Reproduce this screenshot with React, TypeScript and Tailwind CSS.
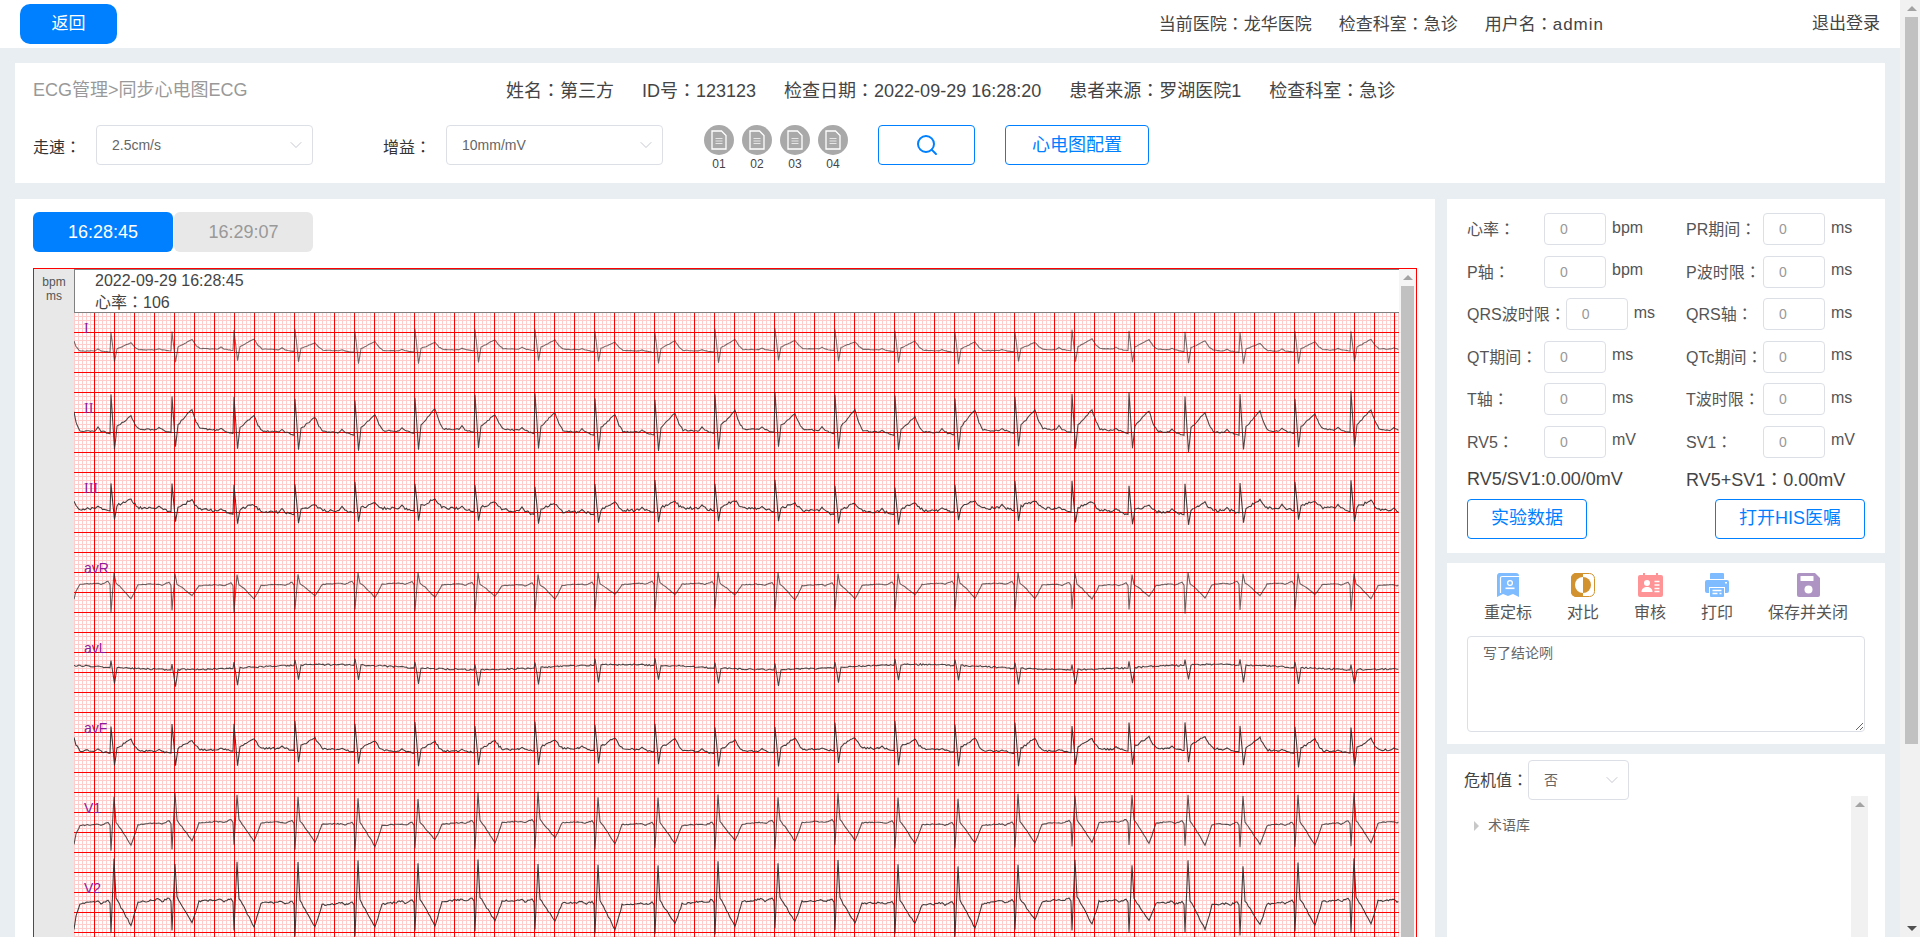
import { ChevronDown, Search } from "lucide-react";

const fontStack = { fontFamily: '"Liberation Sans", "Noto Sans CJK SC", sans-serif' };

const measures = [
  [
    { label: "心率", value: "0", unit: "bpm" },
    { label: "PR期间", value: "0", unit: "ms" },
  ],
  [
    { label: "P轴", value: "0", unit: "bpm" },
    { label: "P波时限", value: "0", unit: "ms" },
  ],
  [
    { label: "QRS波时限", value: "0", unit: "ms" },
    { label: "QRS轴", value: "0", unit: "ms" },
  ],
  [
    { label: "QT期间", value: "0", unit: "ms" },
    { label: "QTc期间", value: "0", unit: "ms" },
  ],
  [
    { label: "T轴", value: "0", unit: "ms" },
    { label: "T波时限", value: "0", unit: "ms" },
  ],
  [
    { label: "RV5", value: "0", unit: "mV" },
    { label: "SV1", value: "0", unit: "mV" },
  ],
];

// beat positions read off the reference, in page x
const beats = [
  111, 172, 234, 295, 355, 415, 475, 535, 595, 655, 715, 775, 835, 895, 955,
  1015, 1072, 1129, 1185, 1240, 1295, 1351, 1407,
];

type Lead = {
  name: string;
  labelY: number;
  base: number;
  r: number;
  s: number;
  t: number;
  p: number;
  noise: number;
  start: number;
  wander: number;
  inverted?: boolean;
  serif?: boolean;
  opacity: number;
};

const leads: Lead[] = [
  { name: "I", labelY: 333, base: 350, r: 20, s: 12, t: 9, p: 1.5, noise: 0.3, start: -10, wander: 1, serif: true, opacity: 0.65 },
  { name: "II", labelY: 413, base: 431, r: 36, s: 18, t: 18, p: 3, noise: 0.8, start: -20, wander: 1.5, serif: true, opacity: 0.85 },
  { name: "III", labelY: 493, base: 510, r: 27, s: 12, t: 8, p: 3, noise: 1.4, start: -8, wander: 2, serif: true, opacity: 0.9 },
  { name: "avR", labelY: 573, base: 585, r: 12, s: 26, t: 12, p: 1, noise: 0.35, start: 15, wander: 0.8, inverted: true, opacity: 0.7 },
  { name: "avL", labelY: 653, base: 667, r: 6, s: 16, t: 0, p: 0.5, noise: 0.8, start: 0, wander: 2.5, opacity: 0.85 },
  { name: "avF", labelY: 733, base: 750, r: 27, s: 15, t: 11, p: 2, noise: 1, start: -13, wander: 1.5, opacity: 0.9 },
  { name: "V1", labelY: 813, base: 824, r: 29, s: 24, t: 18, p: 1, noise: 0.5, start: 19, wander: 1.5, inverted: true, opacity: 0.8 },
  { name: "V2", labelY: 893, base: 903, r: 42, s: 30, t: 21, p: 2, noise: 0.9, start: 25, wander: 2, inverted: true, opacity: 0.9 },
];

function makeRandom(seed: number) {
  let s = seed;
  return () => {
    s = (s * 1664525 + 1013904223) % 4294967296;
    return s / 4294967296;
  };
}

function tracePath(lead: Lead, index: number) {
  const rand = makeRandom(index * 977 + 31);
  const anchors: [number, number][] = [];
  if (lead.start !== 0) {
    anchors.push([74, lead.start], [76, lead.start * 0.45], [80, 0]);
  } else {
    anchors.push([74, 0]);
  }

  beats.forEach((x0, i) => {
    const rr = (beats[i + 1] ?? x0 + 56) - x0;
    const r = lead.r * (0.88 + rand() * 0.2);
    const s = lead.s * (0.9 + rand() * 0.2);
    const t = lead.t * (0.8 + rand() * 0.4);
    const p = lead.p * (0.6 + rand() * 0.8);

    if (lead.inverted) {
      anchors.push(
        [x0 - 13, -p],
        [x0 - 10, 0],
        [x0 - 3, -3],
        [x0 - 1, 0],
        [x0, s],
        [x0 + 3, -r],
        [x0 + 5, -r * 0.1],
        [x0 + 10, t * 0.2],
        [x0 + 15, t * 0.6],
        [x0 + 20, t],
        [x0 + 23, t * 0.6],
        [x0 + 27, 0],
        [x0 + rr - 20, -1],
      );
    } else {
      anchors.push(
        [x0 - 16, 0],
        [x0 - 13, -p],
        [x0 - 10, 0],
        [x0 - 3, lead.p * 0.8],
        [x0 - 1, lead.p],
        [x0, -r],
        [x0 + 3.5, s],
        [x0 + 6, -t * 0.25],
        [x0 + 11, -t * 0.5],
        [x0 + 17, -t * 0.85],
        [x0 + 20, -t],
        [x0 + 24, -t * 0.4],
        [x0 + 28, -t * 0.05],
        [x0 + rr - 20, 0],
      );
    }
  });

  let d = "";
  for (let i = 0; i < anchors.length - 1; i++) {
    const [x1, y1] = anchors[i];
    const [x2, y2] = anchors[i + 1];
    if (x1 >= 1399) break;
    const span = x2 - x1;
    const steps = Math.max(1, Math.round(span / 1.5));
    for (let k = 0; k < steps; k++) {
      const x = x1 + (span * k) / steps;
      if (x > 1399) break;
      const jitter = span > 3 ? (rand() - 0.5) * 2 * lead.noise : 0;
      const drift = Math.sin(x / 47 + index) * lead.wander;
      const y = lead.base + y1 + ((y2 - y1) * k) / steps + jitter + drift;
      d += `${d ? "L" : "M"}${x.toFixed(1)} ${y.toFixed(1)}`;
    }
  }
  return d;
}

const minorX = Array.from({ length: 332 }, (_, i) => 74 + i * 4);
const minorY = Array.from({ length: 158 }, (_, i) => 312 + i * 4);
const majorX = Array.from({ length: 66 }, (_, i) => 94 + i * 20);
const majorY = Array.from({ length: 31 }, (_, i) => 332 + i * 20);

function EcgChart() {
  return (
    <svg width="1325" height="625" viewBox="74 313 1325 625" className="block">
      <rect x="74" y="313" width="1325" height="625" fill="#fff" />
      <g stroke="#ffcccc" strokeWidth="1" shapeRendering="crispEdges">
        {minorX.map((x) => (
          <line key={x} x1={x + 0.5} x2={x + 0.5} y1="313" y2="938" />
        ))}
        {minorY.map((y) => (
          <line key={y} y1={y + 0.5} y2={y + 0.5} x1="74" x2="1399" />
        ))}
      </g>
      <g stroke="#ff0000" strokeWidth="1" shapeRendering="crispEdges">
        {majorX.map((x) => (
          <line key={x} x1={x + 0.5} x2={x + 0.5} y1="313" y2="938" />
        ))}
        {majorY.map((y) => (
          <line key={y} y1={y + 0.5} y2={y + 0.5} x1="74" x2="1399" />
        ))}
      </g>
      {leads.map((lead, i) => (
        <g key={lead.name}>
          <path d={tracePath(lead, i)} fill="none" stroke="#2a2a2a" strokeWidth="1.1" strokeOpacity={lead.opacity} />
          <text
            x="84"
            y={lead.labelY}
            fill="#8e1a9c"
            fontSize="14"
            fontFamily={lead.serif ? '"Liberation Serif", serif' : '"Liberation Sans", sans-serif'}
          >
            {lead.name}
          </text>
        </g>
      ))}
    </svg>
  );
}

function ArrowUp({ color = "#a3a3a3" }: { color?: string }) {
  return <span className="block h-0 w-0 border-x-[5px] border-b-[5px] border-x-transparent" style={{ borderBottomColor: color }} />;
}

// the reference's font centres the full-width colon, the TC cut of Noto does too
function Colon() {
  return <span className="font-['Noto_Sans_CJK_TC']">：</span>;
}

function FakeSelect({ text, className }: { text: string; className: string }) {
  return (
    <div className={`flex h-[40px] shrink-0 items-center justify-between rounded-[4px] border border-[#dcdfe6] bg-white pl-[15px] pr-[6px] text-[14px] text-[#666] ${className}`}>
      <span>{text}</span>
      <ChevronDown size={20} strokeWidth={0.8} color="#a8acb6" />
    </div>
  );
}

function FileBadge({ label }: { label: string }) {
  return (
    <div className="flex w-[30px] flex-col items-center">
      <div className="flex h-[30px] w-[30px] items-center justify-center rounded-full bg-[#a9a9a9]">
        <svg width="16" height="20" viewBox="0 0 16 20" fill="none">
          <path d="M1 1h9.5L15 5.5V19H1z" stroke="#fff" strokeWidth="1.3" />
          <path d="M4.5 8.5h7M4.5 11h7M4.5 13.5h7" stroke="#e6e6e6" strokeWidth="1.2" />
        </svg>
      </div>
      <span className="mt-[2px] text-[12px] leading-[14px] text-[#444]">{label}</span>
    </div>
  );
}

function RelocateIcon() {
  return (
    <svg width="24" height="24" viewBox="0 0 24 24">
      <path d="M4 0h16a3 3 0 0 1 3 3v21l-6-3-5 2-5-2-6 3V3a3 3 0 0 1 4-3z" fill="#7fbcff" />
      <path d="M4.5 20V5A1.5 1.5 0 0 1 6 3.5h17" fill="none" stroke="#fff" strokeWidth="1.2" />
      <circle cx="14" cy="10" r="2.4" fill="none" stroke="#fff" strokeWidth="1.3" />
      <rect x="9.5" y="14.5" width="9" height="1.6" fill="#fff" />
    </svg>
  );
}

function CompareIcon() {
  return (
    <svg width="24" height="24" viewBox="0 0 24 24">
      <rect x="0.5" y="0.5" width="23" height="23" rx="5" fill="#fff" stroke="#d29230" />
      <path d="M5 0h7v24H5a5 5 0 0 1-5-5V5a5 5 0 0 1 5-5z" fill="#d29230" />
      <path d="M12 4a8 8 0 0 0 0 16z" fill="#fff" />
      <path d="M12 4a8 8 0 0 1 0 16z" fill="#d29230" />
    </svg>
  );
}

function AuditIcon() {
  return (
    <svg width="25" height="24" viewBox="0 0 25 24">
      <path d="M2 2h3V0h2v2h11V0h2v2h3a2 2 0 0 1 2 2v18a2 2 0 0 1-2 2H2a2 2 0 0 1-2-2V4a2 2 0 0 1 2-2z" fill="#ff9496" />
      <circle cx="9" cy="10" r="3" fill="#fff" />
      <path d="M3.5 19c0-3.5 2.5-5 5.5-5s5.5 1.5 5.5 5z" fill="#fff" />
      <path d="M16.5 8.5h5M16.5 12h5M16.5 15.5h5M16.5 18.5h5" stroke="#fff" strokeWidth="1.5" />
    </svg>
  );
}

function PrintIcon() {
  return (
    <svg width="24" height="24" viewBox="0 0 24 24">
      <path d="M6 0h12a1 1 0 0 1 1 1v5H5V1a1 1 0 0 1 1-1z" fill="#7fbcff" />
      <path d="M2 7h20a2 2 0 0 1 2 2v9a2 2 0 0 1-2 2h-2v-6H4v6H2a2 2 0 0 1-2-2V9a2 2 0 0 1 2-2z" fill="#7fbcff" />
      <path d="M5 15h14v8a1 1 0 0 1-1 1H6a1 1 0 0 1-1-1z" fill="#7fbcff" />
      <path d="M7.5 17.5h9M7.5 20.5h5M14.5 20.5h2" stroke="#fff" strokeWidth="1.3" />
      <rect x="20" y="9" width="2" height="1.5" fill="#fff" />
    </svg>
  );
}

function SaveIcon() {
  return (
    <svg width="23" height="24" viewBox="0 0 23 24">
      <path d="M2 0h16l5 5v17a2 2 0 0 1-2 2H2a2 2 0 0 1-2-2V2a2 2 0 0 1 2-2z" fill="#ae94c3" />
      <rect x="3.5" y="3" width="13" height="5" rx="0.5" fill="#fff" />
      <circle cx="11.5" cy="16.5" r="4" fill="#fff" />
    </svg>
  );
}

const actions = [
  { label: "重定标", icon: <RelocateIcon /> },
  { label: "对比", icon: <CompareIcon /> },
  { label: "审核", icon: <AuditIcon /> },
  { label: "打印", icon: <PrintIcon /> },
  { label: "保存并关闭", icon: <SaveIcon /> },
];

export default function App() {
  return (
    <div className="flex h-[937px] overflow-hidden bg-[#e9eef2] text-[#333]" style={fontStack}>
      <main className="h-[937px] w-[1900px] shrink-0 overflow-hidden">
        <header className="flex h-[48px] items-center bg-white pl-[20px] pr-[20px]">
          <button type="button" className="h-[40px] w-[97px] rounded-[10px] bg-[#0080ff] text-[17px] text-white">
            返回
          </button>
          <div className="ml-auto flex items-center gap-[27px] text-[17px] text-[#444]">
            <span>当前医院<Colon />龙华医院</span>
            <span>检查科室<Colon />急诊</span>
            <span>用户名<Colon /><span className="tracking-[1px]">admin</span></span>
            <span className="ml-[181px]">退出登录</span>
          </div>
        </header>

        <div className="px-[15px] pt-[15px]">
          <section className="h-[120px] bg-white pl-[18px]">
            <div className="flex h-[54px] items-center text-[18px]">
              <div className="w-[473px] text-[#999]">ECG管理&gt;同步心电图ECG</div>
              <div className="flex gap-[28px] text-[#444]">
                <span>姓名<Colon />第三方</span>
                <span>ID号<Colon />123123</span>
                <span>检查日期<Colon />2022-09-29 16:28:20</span>
                <span>患者来源<Colon />罗湖医院1</span>
                <span>检查科室<Colon />急诊</span>
              </div>
            </div>
            <div className="mt-[8px] flex items-start">
              <span className="w-[63px] pt-[9px] text-[16px] leading-[24px]">走速<Colon /></span>
              <FakeSelect text="2.5cm/s" className="w-[217px]" />
              <span className="ml-[70px] w-[63px] pt-[9px] text-[16px] leading-[24px]">增益<Colon /></span>
              <FakeSelect text="10mm/mV" className="w-[217px]" />
              <div className="ml-[41px] flex gap-[8px]">
                <FileBadge label="01" />
                <FileBadge label="02" />
                <FileBadge label="03" />
                <FileBadge label="04" />
              </div>
              <button type="button" className="ml-[30px] flex h-[40px] w-[97px] items-center justify-center rounded-[4px] border border-[#0080ff] bg-white">
                <Search size={24} strokeWidth={2} color="#0080ff" />
              </button>
              <button type="button" className="ml-[30px] h-[40px] w-[144px] rounded-[4px] border border-[#0080ff] bg-white text-[18px] text-[#0080ff]">
                心电图配置
              </button>
            </div>
          </section>

          <div className="mt-[16px] flex gap-[12px]">
            <section className="h-[800px] w-[1420px] shrink-0 bg-white px-[18px] pt-[13px]">
              <div className="flex gap-[1px] text-[18px]">
                <div className="flex h-[40px] w-[140px] items-center justify-center rounded-[6px] bg-[#0080ff] text-white">16:28:45</div>
                <div className="flex h-[40px] w-[139px] items-center justify-center rounded-[6px] bg-[#e8e8e8] text-[#999]">16:29:07</div>
              </div>
              <div className="mt-[16px] flex h-[720px] border border-[#ff0000]">
                <div className="w-[40px] shrink-0 bg-[#e8e8e8] pt-[6px] text-center text-[12px] leading-[14px] text-[#555]">
                  <div>bpm</div>
                  <div>ms</div>
                </div>
                <div className="w-[1325px] shrink-0">
                  <div className="h-[44px] border-l border-y border-[#808080] pl-[20px] text-[16px] leading-[21px] text-[#444]">
                    <div>2022-09-29 16:28:45</div>
                    <div>心率<Colon />106</div>
                  </div>
                  <EcgChart />
                </div>
                <div className="flex w-[17px] shrink-0 flex-col bg-[#f5f5f5] pl-[2px] pr-[2px]">
                  <div className="flex h-[17px] shrink-0 items-center justify-center">
                    <ArrowUp />
                  </div>
                  <div className="h-[660px] bg-[#c1c1c1]" />
                </div>
              </div>
            </section>

            <div className="flex w-[438px] shrink-0 flex-col gap-[10px]">
              <section className="h-[354px] bg-white px-[20px] pt-[14px]">
                <div className="grid grid-cols-[219px_1fr] gap-y-[10.5px]">
                  {measures.flat().map((item) => (
                    <div key={item.label} className="flex h-[32px] items-center text-[16px] text-[#555]">
                      <span className="min-w-[77px] whitespace-nowrap">{item.label}<Colon /></span>
                      <input
                        readOnly
                        value={item.value}
                        className="h-[32px] w-[62px] rounded-[4px] border border-[#dcdfe6] pl-[15px] text-[14px] text-[#999] outline-none"
                      />
                      <span className="ml-[6px] -mt-[3px]">{item.unit}</span>
                    </div>
                  ))}
                </div>
                <div className="mt-[7px] grid h-[24px] grid-cols-[219px_1fr] items-center text-[18px] text-[#444]">
                  <span>RV5/SV1:0.00/0mV</span>
                  <span>RV5+SV1<Colon />0.00mV</span>
                </div>
                <div className="mt-[10px] flex justify-between text-[18px] text-[#0080ff]">
                  <button type="button" className="h-[40px] w-[120px] rounded-[4px] border border-[#0080ff]">
                    实验数据
                  </button>
                  <button type="button" className="h-[40px] w-[150px] rounded-[4px] border border-[#0080ff]">
                    打开HIS医嘱
                  </button>
                </div>
              </section>

              <section className="h-[181px] bg-white px-[20px] pt-[10px]">
                <div className="ml-[17px] flex gap-[35px]">
                  {actions.map((action) => (
                    <div key={action.label} className="flex flex-col items-center">
                      <div className="flex h-[24px] items-center">{action.icon}</div>
                      <span className="mt-[4px] text-[16px] leading-[24px] text-[#555]">{action.label}</span>
                    </div>
                  ))}
                </div>
                <textarea
                  readOnly
                  value="写了结论咧"
                  className="mt-[11px] block h-[96px] w-[398px] rounded-[4px] border border-[#dcdfe6] px-[15px] pt-[6px] text-[14px] leading-[20px] text-[#666] outline-none"
                />
              </section>

              <section className="relative h-[300px] bg-white pl-[17px] pt-[6px]">
                <div className="flex items-center">
                  <span className="w-[64px] shrink-0 whitespace-nowrap text-[16px] text-[#444]">危机值<Colon /></span>
                  <FakeSelect text="否" className="w-[101px]" />
                </div>
                <div className="absolute right-[17px] top-[42px] bottom-0 w-[17px] bg-[#f1f1f1] pt-[6px]">
                  <div className="flex justify-center">
                    <ArrowUp />
                  </div>
                </div>
                <div className="mt-[15px] flex items-center pl-[10px] text-[14px] text-[#666]">
                  <span className="h-0 w-0 border-y-[5px] border-l-[5px] border-y-transparent border-l-[#c8c8c8]" />
                  <span className="ml-[9px]">术语库</span>
                </div>
              </section>
            </div>
          </div>
        </div>
      </main>

      <div className="flex h-[937px] w-[20px] shrink-0 flex-col bg-[#f1f1f1] pl-[5px] pr-[2px]">
        <div className="flex h-[17px] shrink-0 items-center justify-center">
          <ArrowUp />
        </div>
        <div className="h-[727px] shrink-0 bg-[#c1c1c1]" />
        <div className="mt-auto flex h-[17px] shrink-0 items-center justify-center">
          <span className="block h-0 w-0 border-x-[5px] border-t-[5px] border-x-transparent border-t-[#505050]" />
        </div>
      </div>
    </div>
  );
}
